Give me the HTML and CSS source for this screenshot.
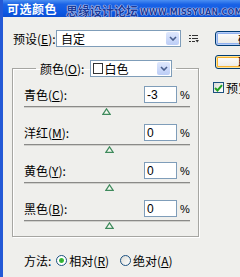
FILE: index.html
```html
<!DOCTYPE html>
<html lang="zh-CN">
<head>
  <meta charset="UTF-8">
  <title>可选颜色</title>
  <link rel="stylesheet" href="styles.css">
</head>
<body>
  <div class="window">
    <div class="titlebar">
      <span class="title">可选颜色</span>
      <span class="watermark"><span class="wm-cn">思缘设计论坛</span><span class="wm-en">WWW.MISSYUAN.COM</span></span>
    </div>
    <div class="body">
      <div class="main">
        <div class="preset">
          <label class="preset-label">预设(<u>E</u>):</label>
          <div class="select preset-select">
            <span class="select-text">自定</span>
            <span class="select-btn"><svg width="8" height="5" viewBox="0 0 8 5"><path d="M1 1 L4 4 L7 1" fill="none" stroke="#4a5f8c" stroke-width="1.6"/></svg></span>
          </div>
          <svg class="menu-icon" width="10" height="8" viewBox="0 0 10 8">
            <rect x="0" y="0" width="2" height="1" fill="#333"/>
            <rect x="3" y="0" width="6" height="1" fill="#333"/>
            <rect x="0" y="3" width="2" height="1" fill="#333"/>
            <rect x="3" y="3" width="6" height="1" fill="#333"/>
            <rect x="0" y="6" width="2" height="1" fill="#333"/>
            <rect x="3" y="6" width="3" height="1" fill="#333"/>
            <path d="M6.5 5 L10 5 L8.25 7.5 Z" fill="#333"/>
          </svg>
        </div>

        <fieldset class="group">
          <legend class="group-legend">
            <span>颜色(<u>O</u>):</span>
            <div class="select color-select">
              <span class="swatch"></span>
              <span class="select-text">白色</span>
              <span class="select-btn"><svg width="8" height="5" viewBox="0 0 8 5"><path d="M1 1 L4 4 L7 1" fill="none" stroke="#4a5f8c" stroke-width="1.6"/></svg></span>
            </div>
          </legend>

          <div class="slider-row">
            <div class="row">
              <span>青色(<u>C</u>):</span>
              <input class="num" type="text" value="-3">
              <span class="pct">%</span>
            </div>
            <div class="track"><svg class="thumb" style="left: 78px" width="9" height="7" viewBox="0 0 9 7"><path d="M4.5 0.8 L8.2 6.3 L0.8 6.3 Z" fill="#f4f8f0" stroke="#3f8a5c" stroke-width="1.2"/></svg></div>
          </div>
          <div class="slider-row">
            <div class="row">
              <span>洋红(<u>M</u>):</span>
              <input class="num" type="text" value="0">
              <span class="pct">%</span>
            </div>
            <div class="track"><svg class="thumb" style="left: 81px" width="9" height="7" viewBox="0 0 9 7"><path d="M4.5 0.8 L8.2 6.3 L0.8 6.3 Z" fill="#f4f8f0" stroke="#3f8a5c" stroke-width="1.2"/></svg></div>
          </div>
          <div class="slider-row">
            <div class="row">
              <span>黄色(<u>Y</u>):</span>
              <input class="num" type="text" value="0">
              <span class="pct">%</span>
            </div>
            <div class="track"><svg class="thumb" style="left: 81px" width="9" height="7" viewBox="0 0 9 7"><path d="M4.5 0.8 L8.2 6.3 L0.8 6.3 Z" fill="#f4f8f0" stroke="#3f8a5c" stroke-width="1.2"/></svg></div>
          </div>
          <div class="slider-row">
            <div class="row">
              <span>黑色(<u>B</u>):</span>
              <input class="num" type="text" value="0">
              <span class="pct">%</span>
            </div>
            <div class="track"><svg class="thumb" style="left: 81px" width="9" height="7" viewBox="0 0 9 7"><path d="M4.5 0.8 L8.2 6.3 L0.8 6.3 Z" fill="#f4f8f0" stroke="#3f8a5c" stroke-width="1.2"/></svg></div>
          </div>
        </fieldset>

        <div class="method">
          <span>方法:</span>
          <span class="radio checked"></span>
          <span class="radio-label">相对(<u>R</u>)</span>
          <span class="radio"></span>
          <span class="radio-label">绝对(<u>A</u>)</span>
        </div>
      </div>

      <div class="side">
        <button class="btn btn-default">确定</button>
        <button class="btn btn-hover">取消</button>
        <div class="preview">
          <span class="checkbox"><svg width="9" height="8" viewBox="0 0 9 8"><path d="M1 4 L3.5 6.5 L8 1.2" fill="none" stroke="#21a121" stroke-width="2"/></svg></span>
          <span>预览</span>
        </div>
      </div>
    </div>
  </div>
</body>
</html>
```

FILE: styles.css
```css
html, body {
  margin: 0;
  padding: 0;
}
body {
  width: 240px;
  height: 277px;
  overflow: hidden;
  background-color: #efefec;
  font-family: "Noto Sans CJK SC", "Liberation Sans", sans-serif;
  font-size: 12px;
  color: #000;
}
.window {
  height: 277px;
  border-left: 3px solid #2459d6;
  box-sizing: border-box;
  background-color: #efefec;
}
.titlebar {
  position: relative;
  height: 17px;
  padding-left: 4px;
  background: linear-gradient(#4b8ff2, #1a63e6 25%, #0c57e2 75%, #0a4ed2);
  overflow: visible;
}
.title {
  color: #fff;
  font-weight: bold;
  font-size: 12px;
  line-height: 17px;
  letter-spacing: 0.5px;
}
.watermark {
  position: absolute;
  left: 63px;
  top: 3px;
  display: flex;
  align-items: flex-end;
  white-space: nowrap;
}
.wm-cn {
  font-size: 12px;
  font-weight: bold;
  line-height: 16px;
  color: #1a3a98;
  text-shadow: 0 0 1px #dce8ff, 0 0 1px #dce8ff, 0 0 1px #dce8ff;
}
.wm-en {
  margin-left: 2px;
  margin-bottom: 2px;
  font-family: "DejaVu Sans", sans-serif;
  font-size: 8px;
  font-weight: bold;
  line-height: 9px;
  letter-spacing: 0.2px;
  color: #1a3a98;
  text-shadow: 0 0 1px #e4eeff, 0 0 1px #e4eeff, 0 0 1px #e4eeff;
}
.body {
  display: flex;
  padding-top: 13px;
}
.main {
  width: 212px;
  flex: none;
}
.preset {
  display: flex;
  align-items: center;
  padding-left: 10px;
  height: 17px;
}
.preset-label {
  width: 43px;
}
.select {
  display: flex;
  align-items: center;
  box-sizing: border-box;
  height: 17px;
  background-color: #fff;
  border: 1px solid #7f9db9;
}
.select-text {
  flex: 1;
  padding-left: 4px;
  line-height: 15px;
}
.select-btn {
  display: flex;
  align-items: center;
  justify-content: center;
  width: 13px;
  height: 13px;
  margin-right: 1px;
  background: linear-gradient(#dfe8fd, #bccdf6);
  border-radius: 2px;
}
.preset-select {
  width: 125px;
}
.menu-icon {
  margin-left: 8px;
}

.group {
  margin: 13px 0 0 9px;
  padding: 0 8px 0 11px;
  width: 187px;
  box-sizing: border-box;
  border: 1px solid #a6a6a2;
  box-shadow: 1px 1px 0 #fff, inset 1px 1px 0 #fff;
}
.group-legend {
  display: flex;
  align-items: center;
  margin-left: 12px;
  padding: 0 4px;
  height: 17px;
}
.color-select {
  width: 82px;
  margin-left: 6px;
}
.swatch {
  width: 10px;
  height: 11px;
  margin-left: 2px;
  border: 1px solid #333;
  background-color: #fff;
  box-sizing: border-box;
}
.color-select .select-text {
  padding-left: 1px;
}
.slider-row {
  margin-top: 9px;
}
.slider-row + .slider-row {
  margin-top: 0;
}
.row {
  display: grid;
  grid-template-columns: 1fr 33px 13px;
  align-items: center;
  height: 17px;
}
.num {
  box-sizing: border-box;
  width: 33px;
  height: 17px;
  margin: 0;
  padding: 0 2px;
  border: 1px solid #7f9db9;
  font-family: "Liberation Sans", sans-serif;
  font-size: 12px;
  background-color: #fff;
}
.pct {
  padding-left: 3px;
  font-family: "Liberation Sans", sans-serif;
  font-size: 11px;
}
.track {
  position: relative;
  margin-top: 3px;
  height: 17px;
  border-top: 1px solid #8a8a88;
  box-shadow: inset 0 1px 0 #d0d0cc;
}
.slider-row:last-child .track {
  height: 15px;
}
.thumb {
  position: absolute;
  top: 1px;
}

.method {
  display: flex;
  align-items: center;
  height: 17px;
  margin-top: 15px;
  padding-left: 21px;
}
.radio {
  width: 11px;
  height: 11px;
  box-sizing: border-box;
  margin-left: 5px;
  border: 1px solid #1c5180;
  border-radius: 50%;
  background: linear-gradient(135deg, #dcdcd6, #fff);
}
.radio + .radio-label {
  margin-left: 2px;
}
.radio-label + .radio {
  margin-left: 11px;
}
.radio.checked {
  background: radial-gradient(circle, #2fa52f 0, #3dbb3d 2px, #fff 3px);
}

.side {
  flex: none;
  width: 70px;
  padding-top: 1px;
}
.btn {
  display: block;
  box-sizing: border-box;
  width: 70px;
  height: 15px;
  margin: 0 0 9px;
  padding: 0;
  border: 1px solid #003c74;
  border-radius: 3px;
  background: linear-gradient(#fff, #ecebe6 85%, #d6d0c5);
  font-family: "Noto Sans CJK SC", sans-serif;
  font-size: 11px;
  line-height: 12px;
  text-align: left;
  padding-left: 22px;
}
.btn-default {
  box-shadow: inset 0 0 0 1px #b6cdf7, inset 0 0 0 2px #8fb0ee;
}
.btn-hover {
  height: 14px;
  box-shadow: inset 0 0 0 1px #fce49c, inset 0 0 0 2px #f8b330;
}
.preview {
  display: flex;
  align-items: center;
  margin-top: 10px;
  margin-left: -2px;
}
.checkbox {
  display: flex;
  align-items: center;
  justify-content: center;
  width: 11px;
  height: 11px;
  box-sizing: border-box;
  margin-right: 2px;
  border: 1px solid #1c5180;
  background: linear-gradient(135deg, #dcdcd6, #fff);
}
```
